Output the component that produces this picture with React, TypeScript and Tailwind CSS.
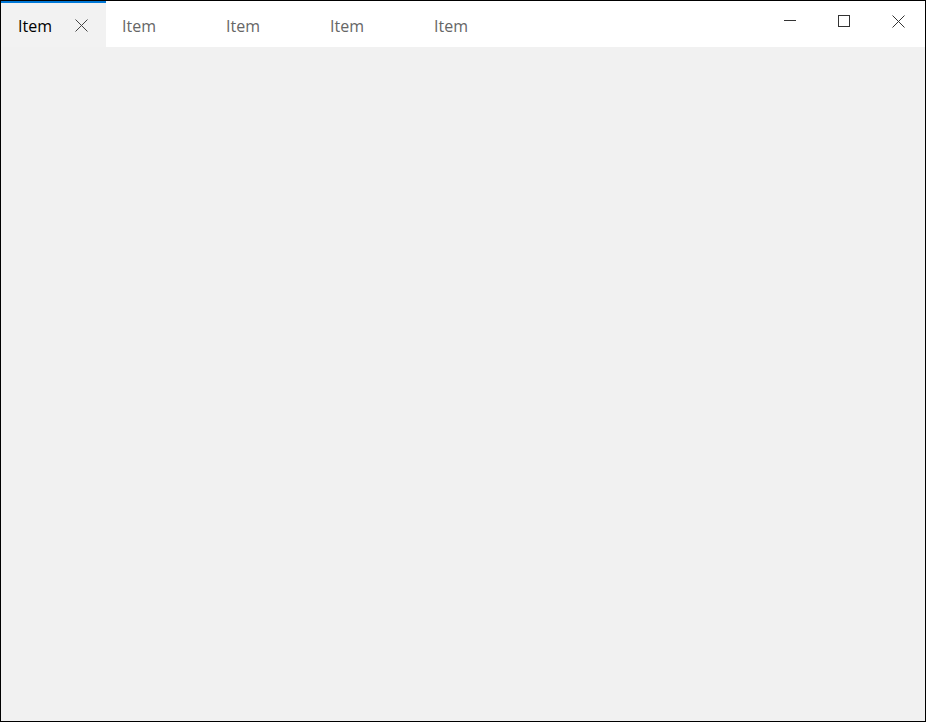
const TABS = ["Item", "Item", "Item", "Item", "Item"]

function CrossIcon({ size, className }: { size: number; className?: string }) {
  return (
    <svg width={size} height={size} viewBox={`0 0 ${size} ${size}`} className={className}>
      <path d={`M0.5 0.5 L${size - 0.5} ${size - 0.5} M${size - 0.5} 0.5 L0.5 ${size - 0.5}`} stroke="currentColor" strokeWidth="1" fill="none" />
    </svg>
  )
}

export default function App() {
  return (
    <div
      className="w-[926px] h-[722px] border border-black bg-[#f1f1f1] flex flex-col overflow-hidden"
      style={{ fontFamily: '"Open Sans", "Noto Sans", sans-serif' }}
    >
      {/* Tab strip */}
      <div className="h-[46px] flex bg-white flex-shrink-0">
        {TABS.map((t, i) =>
          i === 0 ? (
            <div
              key={i}
              className="w-[105px] flex items-center justify-between pl-[17px] pr-[18px] bg-[#f2f2f2] border-t-2 border-[#0078d7]"
            >
              <span className="text-[16px] text-black font-medium pt-[1px]">{t}</span>
              <CrossIcon size={13} className="text-[#444]" />
            </div>
          ) : (
            <div key={i} className="w-[104px] flex items-center pl-[16px] pt-[3px]">
              <span className="text-[16px] text-[#666] font-medium">{t}</span>
            </div>
          )
        )}
        <div className="flex-1" />
        <div className="flex">
          <button className="w-[54px] h-[40px] flex items-center justify-center text-[#333]">
            <svg width="12" height="12" viewBox="0 0 12 12">
              <path d="M0 5.5 H12" stroke="currentColor" strokeWidth="1" />
            </svg>
          </button>
          <button className="w-[54px] h-[40px] flex items-center justify-center text-[#333]">
            <svg width="12" height="12" viewBox="0 0 12 12">
              <rect x="0.5" y="0.5" width="11" height="11" stroke="currentColor" strokeWidth="1" fill="none" />
            </svg>
          </button>
          <button className="w-[54px] h-[40px] flex items-center justify-center text-[#333]">
            <CrossIcon size={13} />
          </button>
        </div>
      </div>

      {/* Content */}
      <div className="flex-1" />
    </div>
  )
}
